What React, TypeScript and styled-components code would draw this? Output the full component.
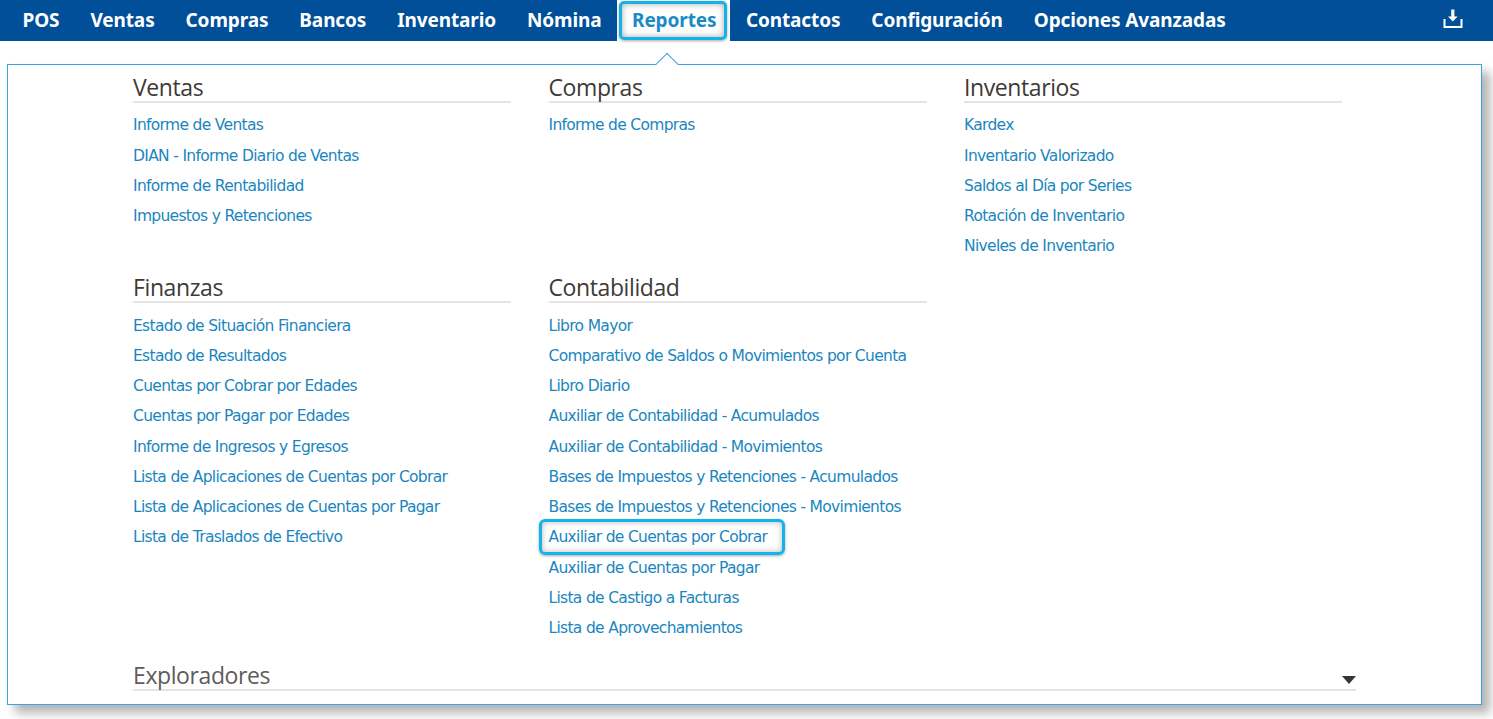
import React, { FC } from 'react'
import styled, { createGlobalStyle } from 'styled-components'

const navItems = ['POS', 'Ventas', 'Compras', 'Bancos', 'Inventario', 'Nómina', 'Reportes', 'Contactos', 'Configuración', 'Opciones Avanzadas']

interface MenuGroup {
    title: string
    links: string[]
}

const topGroups: MenuGroup[] = [
    {
        title: 'Ventas',
        links: ['Informe de Ventas', 'DIAN - Informe Diario de Ventas', 'Informe de Rentabilidad', 'Impuestos y Retenciones']
    },
    {
        title: 'Compras',
        links: ['Informe de Compras']
    },
    {
        title: 'Inventarios',
        links: ['Kardex', 'Inventario Valorizado', 'Saldos al Día por Series', 'Rotación de Inventario', 'Niveles de Inventario']
    }
]

const bottomGroups: MenuGroup[] = [
    {
        title: 'Finanzas',
        links: [
            'Estado de Situación Financiera',
            'Estado de Resultados',
            'Cuentas por Cobrar por Edades',
            'Cuentas por Pagar por Edades',
            'Informe de Ingresos y Egresos',
            'Lista de Aplicaciones de Cuentas por Cobrar',
            'Lista de Aplicaciones de Cuentas por Pagar',
            'Lista de Traslados de Efectivo'
        ]
    },
    {
        title: 'Contabilidad',
        links: [
            'Libro Mayor',
            'Comparativo de Saldos o Movimientos por Cuenta',
            'Libro Diario',
            'Auxiliar de Contabilidad - Acumulados',
            'Auxiliar de Contabilidad - Movimientos',
            'Bases de Impuestos y Retenciones - Acumulados',
            'Bases de Impuestos y Retenciones - Movimientos',
            'Auxiliar de Cuentas por Cobrar',
            'Auxiliar de Cuentas por Pagar',
            'Lista de Castigo a Facturas',
            'Lista de Aprovechamientos'
        ]
    }
]

const MARKED_LINK = 'Auxiliar de Cuentas por Cobrar'

const Group: FC<{ group: MenuGroup }> = ({ group }) => (
    <Column>
        <Title>{group.title}</Title>
        <LinkList>
            {group.links.map(link => (
                <LinkRow key={link}>
                    <MenuLink $marked={link === MARKED_LINK}>{link}</MenuLink>
                </LinkRow>
            ))}
        </LinkList>
    </Column>
)

export default function App() {
    return (
        <Page>
            <GlobalStyle />
            <NavBar>
                <NavList>
                    {navItems.map(item => (
                        <NavItem key={item} $active={item === 'Reportes'}>
                            <NavLabel $active={item === 'Reportes'}>{item}</NavLabel>
                        </NavItem>
                    ))}
                </NavList>
                <DownloadButton aria-label="Descargar">
                    <svg width="20" height="20" viewBox="0 0 20 20" fill="none">
                        <path d="M8.2 0.5h3.2v7h3.2L9.8 12.6 5 7.500h3.200z" fill="#fff" />
                        <path d="M0.500 10v9h19v-9h-2v7h-15v-7z" fill="#fff" />
                    </svg>
                </DownloadButton>
            </NavBar>
            <Panel>
                <Caret />
                <GroupRow $height={200.2}>
                    {topGroups.map(group => <Group key={group.title} group={group} />)}
                </GroupRow>
                <GroupRow $height={384.8}>
                    {bottomGroups.map(group => <Group key={group.title} group={group} />)}
                </GroupRow>
                <Explorers>
                    <ExplorersTitle>Exploradores</ExplorersTitle>
                    <ArrowDown />
                </Explorers>
            </Panel>
        </Page>
    )
}

const GlobalStyle = createGlobalStyle`
    html, body {
        margin: 0;
        padding: 0;
        background: #fff;
    }
`

const Page = styled.div`
    width: 1493px;
    height: 719px;
    overflow: hidden;
    font-family: "DejaVu Sans", sans-serif;
`

const NavBar = styled.header`
    height: 41px;
    background: #004f98;
    display: flex;
    align-items: center;
    justify-content: space-between;
    padding: 0 30px 0 7px;
`

const NavList = styled.nav`
    display: flex;
    height: 41px;
`

const NavItem = styled.div<{ $active: boolean }>`
    height: 41px;
    box-sizing: border-box;
    display: flex;
    align-items: center;
    padding: 0 ${p => (p.$active ? 0 : 15.5)}px ${p => (p.$active ? 0 : 2)}px;
    background: ${p => (p.$active ? '#fff' : 'transparent')};
`

const NavLabel = styled.span<{ $active: boolean }>`
    font-family: "Noto Sans", sans-serif;
    font-size: 19px;
    font-weight: 700;
    letter-spacing: -0.12px;
    color: ${p => (p.$active ? '#1a8ac6' : '#fff')};
    ${p => p.$active && `
        margin: 0 3px 0 2px;
        padding: 0 8px 0 10px;
        height: 33px;
        line-height: 32px;
        border: 3px solid #12b2ea;
        border-radius: 5px;
        box-shadow: inset 0 0 6px rgba(0, 0, 0, 0.35), 0 1px 3px rgba(0, 0, 0, 0.35);
    `}
`

const DownloadButton = styled.div`
    display: flex;
    margin-bottom: 3px;
`

const Panel = styled.section`
    position: relative;
    box-sizing: border-box;
    width: 1475px;
    height: 641px;
    margin: 23px 0 0 7px;
    padding: 0 125px;
    background: #fff;
    border: 1px solid #3aa5df;
    box-shadow: 8px 8px 10px rgba(0, 0, 0, 0.3);
`

const Caret = styled.span`
    position: absolute;
    left: 651px;
    top: -9px;
    width: 15px;
    height: 15px;
    background: #fff;
    border-top: 1px solid #3aa5df;
    border-left: 1px solid #3aa5df;
    transform: rotate(45deg);
`

const GroupRow = styled.div<{ $height: number }>`
    display: grid;
    grid-template-columns: repeat(3, 378px);
    column-gap: 37.5px;
    height: ${p => p.$height}px;
`

const Column = styled.div`
    min-width: 0;
`

const Title = styled.h3`
    margin: 0;
    height: 38px;
    padding-top: 7px;
    box-sizing: border-box;
    border-bottom: 2px solid #e7e3e3;
    font-family: "Open Sans", sans-serif;
    font-size: 23px;
    line-height: 30px;
    font-weight: 400;
    letter-spacing: -0.4px;
    color: #3e3a37;
`

const LinkList = styled.ul`
    list-style: none;
    margin: 7.4px 0 0;
    padding: 0;
`

const LinkRow = styled.li`
    height: 30.25px;
    line-height: 30px;
    white-space: nowrap;
`

const MenuLink = styled.a<{ $marked: boolean }>`
    font-family: "DejaVu Sans", sans-serif;
    font-size: 15.5px;
    letter-spacing: -0.68px;
    color: #1a86c0;
    ${p => p.$marked && `
        margin-left: -10px;
        padding: 6px 15px 6px 7px;
        border: 3px solid #12b2ea;
        border-radius: 6px;
        box-shadow: inset 0 0 6px rgba(0, 0, 0, 0.28), 0 1px 3px rgba(0, 0, 0, 0.35);
    `}
`

const Explorers = styled.div`
    position: relative;
    width: 1223px;
    height: 36px;
    margin-top: 3px;
    border-bottom: 2px solid #e7e3e3;
`

const ExplorersTitle = styled.h3`
    margin: 0;
    font-family: "Open Sans", sans-serif;
    font-size: 23px;
    line-height: 44px;
    font-weight: 400;
    letter-spacing: -0.4px;
    color: #5f5c5b;
`

const ArrowDown = styled.span`
    position: absolute;
    right: 0;
    top: 23px;
    border-left: 7px solid transparent;
    border-right: 7px solid transparent;
    border-top: 8px solid #33373a;
`
